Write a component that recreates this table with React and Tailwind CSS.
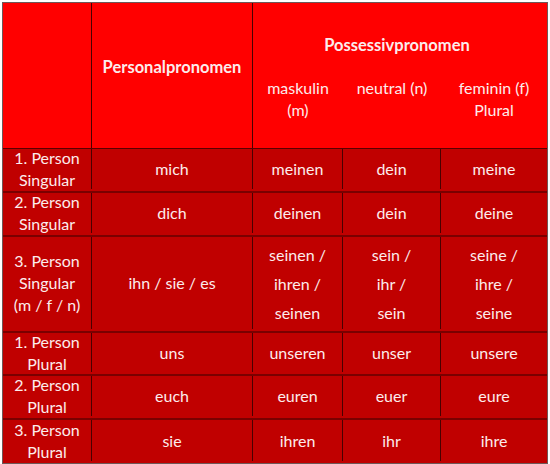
import React from "react";

const rows = [
  { label: ["1. Person", "Singular"], pers: "mich", m: ["meinen"], n: ["dein"], f: ["meine"], h: "h-[44px]" },
  { label: ["2. Person", "Singular"], pers: "dich", m: ["deinen"], n: ["dein"], f: ["deine"], h: "h-[44px]" },
  {
    label: ["3. Person", "Singular", "(m / f / n)"],
    pers: "ihn / sie / es",
    m: ["seinen /", "ihren /", "seinen"],
    n: ["sein /", "ihr /", "sein"],
    f: ["seine /", "ihre /", "seine"],
    h: "h-[96px]",
  },
  { label: ["1. Person", "Plural"], pers: "uns", m: ["unseren"], n: ["unser"], f: ["unsere"], h: "h-[43px]" },
  { label: ["2. Person", "Plural"], pers: "euch", m: ["euren"], n: ["euer"], f: ["eure"], h: "h-[44px]" },
  { label: ["3. Person", "Plural"], pers: "sie", m: ["ihren"], n: ["ihr"], f: ["ihre"], h: "h-[43px]" },
];

const Lines = ({ items, tall }) => (
  <div className={tall ? "leading-[29px]" : "leading-[22px]"}>
    {items.map((t, i) => (
      <div key={i}>{t}</div>
    ))}
  </div>
);

export default function App() {
  return (
    <div className="bg-white w-[550px] h-[464px] pt-[2px] pl-[2px]">
      <div
        className="w-[546px] border border-[#6e5858] text-[#fcecec] text-[16px]"
        style={{ fontFamily: "Lato, 'Open Sans', sans-serif" }}
      >
        {/* Kopfzeile */}
        <div className="flex h-[146px] bg-[#ff0000] border-b border-[#5a0000]">
          <div className="w-[89px] border-r border-[#4a0000]" />
          <div className="w-[161px] border-r border-[#4a0000] flex items-center justify-center pb-[17px] font-bold text-[16.5px]">
            Personalpronomen
          </div>
          <div className="flex-1 flex flex-col">
            <div className="h-[66px] flex items-end justify-center pb-[13px] pr-[6px] font-bold text-[16.5px] leading-[22px]">
              Possessivpronomen
            </div>
            <div className="flex pt-[8px] leading-[22px] text-center">
              <div className="w-[90px]">
                maskulin
                <br />
                (m)
              </div>
              <div className="w-[98px]">neutral (n)</div>
              <div className="flex-1">
                feminin (f)
                <br />
                Plural
              </div>
            </div>
          </div>
        </div>

        {/* Tabellenkörper */}
        {rows.map((r, i) => {
          const tall = r.m.length > 1;
          const last = i === rows.length - 1;
          const rowCls = `flex ${r.h} bg-[#c00000] text-center pb-[2px] ${last ? "" : "border-b-2 border-b-[#7a0000]"}`;
          return (
            <div key={i} className={rowCls}>
              <div className="w-[89px] border-r border-[#4a0000] flex items-center justify-center">
                <Lines items={r.label} />
              </div>
              <div className="w-[161px] border-r border-[#4a0000] flex items-center justify-center">
                {r.pers}
              </div>
              <div className="w-[90px] border-r border-[#4a0000] flex items-center justify-center">
                <Lines items={r.m} tall={tall} />
              </div>
              <div className="w-[98px] border-r border-[#4a0000] flex items-center justify-center">
                <Lines items={r.n} tall={tall} />
              </div>
              <div className="flex-1 flex items-center justify-center">
                <Lines items={r.f} tall={tall} />
              </div>
            </div>
          );
        })}
      </div>
    </div>
  );
}
